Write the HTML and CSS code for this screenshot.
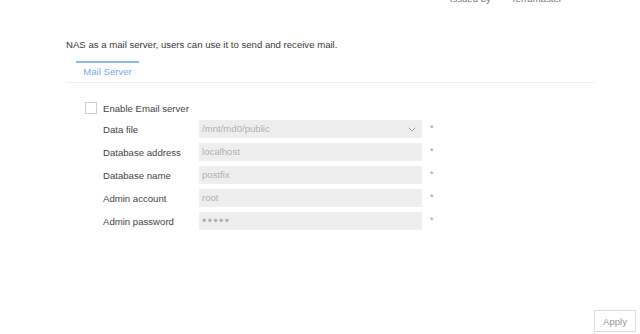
FILE: index.html
```html
<!DOCTYPE html>
<html lang="en">
<head>
    <meta charset="UTF-8">
    <meta name="viewport" content="width=device-width, initial-scale=1.0">
    <title>Mail Server</title>
    <link rel="stylesheet" href="styles.css">
</head>
<body>
    <div class="meta">
        <span>Issued by</span>
        <span>Terramaster</span>
    </div>

    <div class="page">
        <p class="desc">NAS as a mail server, users can use it to send and receive mail.</p>

        <div class="tabs">
            <div class="tab active">Mail Server</div>
        </div>

        <div class="form">
            <label class="check-row">
                <span class="checkbox"></span>
                <span>Enable Email server</span>
            </label>

            <div class="row">
                <span class="label">Data file</span>
                <div class="field select">
                    <span>/mnt/md0/public</span>
                    <svg class="chevron" width="8" height="5" viewBox="0 0 8 5">
                        <path d="M0.8 0.8 L4 4 L7.2 0.8" fill="none" stroke="#a0a0a0" stroke-width="1"/>
                    </svg>
                </div>
                <span class="req">*</span>
            </div>
            <div class="row">
                <span class="label">Database address</span>
                <div class="field">localhost</div>
                <span class="req">*</span>
            </div>
            <div class="row">
                <span class="label">Database name</span>
                <div class="field">postfix</div>
                <span class="req">*</span>
            </div>
            <div class="row">
                <span class="label">Admin account</span>
                <div class="field">root</div>
                <span class="req">*</span>
            </div>
            <div class="row">
                <span class="label">Admin password</span>
                <div class="field dots">&#8226;&#8226;&#8226;&#8226;&#8226;</div>
                <span class="req">*</span>
            </div>
        </div>
    </div>

    <div class="footer">
        <button class="apply">Apply</button>
    </div>
</body>
</html>
```

FILE: styles.css
```css
body {
    margin: 0;
    font-family: "Liberation Sans", Arial, sans-serif;
    font-size: 9.6px;
    color: #444;
    background-color: white;
    height: 334px;
    overflow: hidden;
}
.meta {
    height: 4px;
    overflow: hidden;
    display: flex;
    align-items: flex-end;
    justify-content: flex-end;
    gap: 20px;
    padding-right: 78px;
    line-height: 12px;
    color: #777;
}
.meta span {
    flex-shrink: 0;
    margin-bottom: -1px;
}
.page {
    padding: 0 45px 0 66px;
}
.desc {
    margin: 35px 0 0;
    line-height: 12px;
    color: #3a3a3a;
}
.tabs {
    margin-top: 10px;
    display: flex;
    border-bottom: 1px solid #eeeeee;
}
.tab {
    margin-left: 10px;
    width: 63px;
    padding: 3px 0 4px;
    line-height: 12px;
    text-align: center;
    border-top: 2px solid #88b6f2;
}
.tab.active {
    color: #78aaef;
}
.form {
    padding-left: 19px;
    margin-top: 19px;
}
.check-row {
    display: flex;
    align-items: center;
    height: 12px;
    gap: 6px;
    color: #444;
}
.checkbox {
    width: 10px;
    height: 10px;
    border: 1px solid #cfcfcf;
    background: white;
}
.row {
    display: flex;
    align-items: center;
    height: 18px;
    margin-top: 5px;
    padding-left: 18px;
}
.check-row + .row {
    margin-top: 6px;
}
.label {
    width: 96px;
    flex-shrink: 0;
    color: #444;
}
.field {
    width: 220px;
    height: 18px;
    line-height: 18px;
    padding-left: 3px;
    background-color: #eeeeee;
    color: #b0b0b0;
    display: flex;
    align-items: center;
}
.select {
    justify-content: space-between;
}
.chevron {
    margin-right: 6px;
}
.dots {
    letter-spacing: 1.5px;
    font-size: 12px;
}
.req {
    margin-left: 8px;
    margin-bottom: 3px;
    color: #999;
    font-size: 9px;
    line-height: 12px;
}
.footer {
    position: fixed;
    right: 4px;
    bottom: 2px;
}
.apply {
    width: 42px;
    height: 22px;
    padding: 0;
    background-color: white;
    border: 1px solid #dcdcdc;
    color: #999;
    font-family: "Liberation Sans", Arial, sans-serif;
    font-size: 9.6px;
}
```
